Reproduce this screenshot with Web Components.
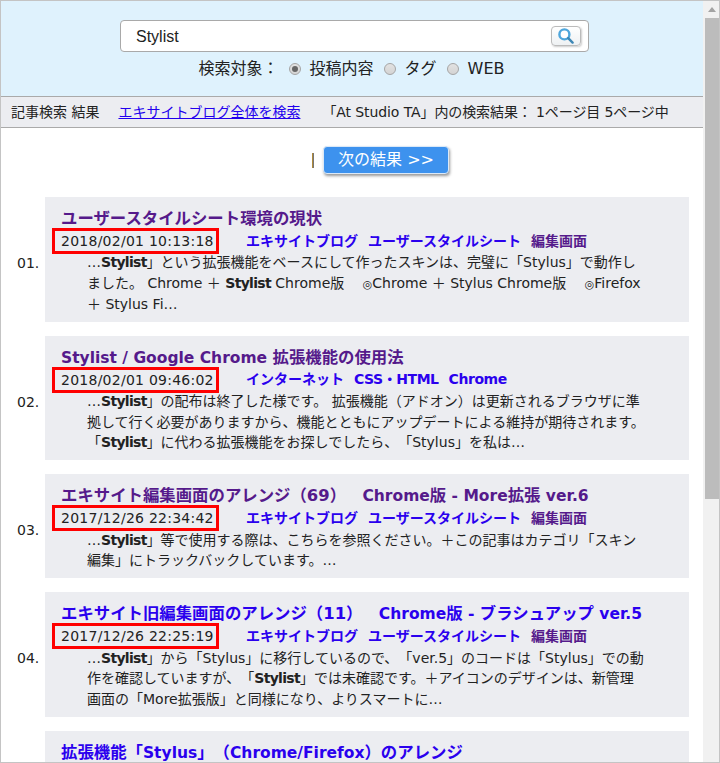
<!DOCTYPE html>
<html lang="ja">
<head>
<meta charset="utf-8">
<title>記事検索 結果</title>
<style>
  html, body { margin: 0; padding: 0; height: 763px; overflow: hidden; background: #fff; }
  body { font-family: "DejaVu Sans", "Noto Sans CJK JP", sans-serif; color: #222; text-spacing-trim: space-all; }
  b { letter-spacing: -.7px; }
  .la { font-size: 15.5px; line-height: 0; }
  .mk { font-size: 11px; line-height: 0; }
  a.tight { letter-spacing: -.45px; }
</style>
</head>
<body>
<search-page>
  <search-header slot="top"></search-header>
  <result-bar slot="top"></result-bar>
  <next-link></next-link>
  <result-item num="01." date="2018/02/01 10:13:18">
    <span slot="heading">ユーザースタイルシート環境の現状</span>
    <a slot="tags">エキサイトブログ</a><a slot="tags">ユーザースタイルシート</a><a slot="tags" class="seen">編集画面</a>
    …<b>Stylist</b>」という拡張機能をベースにして作ったスキンは、完璧に「Stylus」で動作しました。 Chrome ＋ <b>Stylist</b> Chrome版　 <span class="mk">◎</span>Chrome ＋ Stylus Chrome版　 <span class="mk">◎</span>Firefox ＋ Stylus Fi…
  </result-item>
  <result-item num="02." date="2018/02/01 09:46:02">
    <span slot="heading"><span class="la">Stylist / Google Chrome </span>拡張機能の使用法</span>
    <a slot="tags">インターネット</a><a slot="tags" class="tight">CSS・HTML</a><a slot="tags" class="tight">Chrome</a>
    …<b>Stylist</b>」の配布は終了した様です。 拡張機能（アドオン）は更新されるブラウザに準拠して行く必要がありますから、機能とともにアップデートによる維持が期待されます。 「<b>Stylist</b>」に代わる拡張機能をお探しでしたら、「Stylus」を私は…
  </result-item>
  <result-item num="03." date="2017/12/26 22:34:42">
    <span slot="heading">エキサイト編集画面のアレンジ（69）　<span class="la">Chrome</span>版<span class="la"> - More</span>拡張<span class="la"> ver.6</span></span>
    <a slot="tags">エキサイトブログ</a><a slot="tags">ユーザースタイルシート</a><a slot="tags" class="seen">編集画面</a>
    …<b>Stylist</b>」等で使用する際は、こちらを参照ください。＋この記事はカテゴリ「スキン編集」にトラックバックしています。…
  </result-item>
  <result-item unseen num="04." date="2017/12/26 22:25:19">
    <span slot="heading">エキサイト旧編集画面のアレンジ（11）　<span class="la">Chrome</span>版<span class="la"> - </span>ブラシュアップ<span class="la"> ver.5</span></span>
    <a slot="tags">エキサイトブログ</a><a slot="tags">ユーザースタイルシート</a><a slot="tags" class="seen">編集画面</a>
    …<b>Stylist</b>」から「Stylus」に移行しているので、「ver.5」のコードは「Stylus」での動作を確認していますが、「<b>Stylist</b>」では未確認です。＋アイコンのデザインは、新管理画面の「More拡張版」と同様になり、よりスマートに…
  </result-item>
  <result-item unseen>
    <span slot="heading">拡張機能「<span class="la">Stylus</span>」（<span class="la">Chrome/Firefox</span>）のアレンジ</span>
  </result-item>
</search-page>

<script>
class SearchPage extends HTMLElement {
  constructor() {
    super();
    this.attachShadow({ mode: 'open' });
    this.shadowRoot.innerHTML = `
      <style>
        :host { display: flex; width: 720px; height: 763px; box-sizing: border-box; overflow: hidden;
                border: 1px solid #c4c4c4; }
        .main { flex: 1; min-width: 0; height: 761px; overflow: hidden; }
        .list { display: flex; flex-direction: column; gap: 14px; padding: 0 14px 0 0; }
        .bar { flex: none; width: 16px; background: #f1f1f1; display: flex; flex-direction: column; padding: 0 0 0 2px; box-sizing: border-box; }
        .up { flex: none; height: 17px; display: flex; justify-content: center; padding-top: 6px; box-sizing: border-box; }
        .thumb { flex: none; height: 481px; background: #bcbcbc; }
      </style>
      <div class="main">
        <slot name="top"></slot>
        <div class="list"><slot></slot></div>
      </div>
      <div class="bar">
        <div class="up"><svg width="8" height="5" viewBox="0 0 8 5"><path d="M4 0L8 5H0z" fill="#a3a3a3"/></svg></div>
        <div class="thumb"></div>
      </div>`;
  }
}

class SearchHeader extends HTMLElement {
  constructor() {
    super();
    this.attachShadow({ mode: 'open' });
    this.shadowRoot.innerHTML = `
      <style>
        :host { display: block; box-sizing: border-box; background: #dff2fd; padding-top: 19px;
                border-bottom: 1px solid #aaa; height: 96px; font-size: 16px; color: #222; }
        .box { width: 469px; height: 32px; box-sizing: border-box; margin: 0 auto 0 119px; background: #fff;
               border: 1px solid #a9a9a9; border-radius: 4px; display: flex; align-items: center;
               padding: 0 0 0 15px; font: 16px "Liberation Sans", sans-serif; }
        .q { flex: 1; padding-top: 1px; }
        .btn { width: 30px; height: 20px; box-sizing: border-box; border: 1px solid #bbb; border-radius: 4px;
               background: linear-gradient(#fff, #eef1f3); box-shadow: 1px 1px 2px #ccc; display: flex;
               align-items: center; justify-content: center; margin: -1px 7px 0 0; }
        .opts { display: flex; align-items: center; justify-content: center; margin: 5px 0 0 -1px; height: 24px; line-height: 24px; }
        .r { width: 12px; height: 12px; box-sizing: border-box; border-radius: 50%; border: 1px solid #a5a5a5;
             background: linear-gradient(#e2e2e2, #d4d4d4); margin: 0 9px 0 10px; display: flex; align-items: center; justify-content: center; }
        .r.on::after { content: ""; width: 6px; height: 6px; border-radius: 50%; background: #666; }
      </style>
      <div class="box">
        <span class="q">Stylist</span>
        <span class="btn"><svg width="16" height="16" viewBox="0 0 16 16" fill="none">
          <circle cx="6.4" cy="6.4" r="5" fill="#fff" stroke="#4ea6dc" stroke-width="2.4"/>
          <path d="M10.2 10.2L14.6 14.6" stroke="#3d87b5" stroke-width="2.4" stroke-linecap="round"/>
        </svg></span>
      </div>
      <div class="opts">
        <span>検索対象：</span><span class="r on"></span><span>投稿内容</span><span class="r"></span><span>タグ</span><span class="r"></span><span>WEB</span>
      </div>`;
  }
}

class ResultBar extends HTMLElement {
  constructor() {
    super();
    this.attachShadow({ mode: 'open' });
    this.shadowRoot.innerHTML = `
      <style>
        :host { display: flex; align-items: center; height: 31px; box-sizing: border-box; background: #ecedf1;
                border-bottom: 1px solid #aaa; padding: 0 0 2px 10px; font-size: 14px; color: #222; white-space: nowrap; }
        a { color: #2200ee; text-decoration: underline; margin: 0 22px 0 19px; }
        .info { letter-spacing: -.1px; }
      </style>
      <span>記事検索 結果</span>
      <a>エキサイトブログ全体を検索</a>
      <span class="info">「At Studio TA」内の検索結果： 1ページ目 5ページ中</span>`;
  }
}

class NextLink extends HTMLElement {
  constructor() {
    super();
    this.attachShadow({ mode: 'open' });
    this.shadowRoot.innerHTML = `
      <style>
        :host { display: flex; align-items: center; height: 55px; box-sizing: border-box;
                padding: 9px 0 0 311px; font-size: 16px; }
        .sep { width: 1px; height: 15px; background: #b08a3a; margin-right: 9px; border-right: 1px solid #777; }
        .btn { width: 126px; height: 28px; box-sizing: border-box; background: #3d92ee; color: #fff; border-radius: 4px;
               border: 1px solid #dbe9f8; box-shadow: 1px 2px 3px #999; text-align: center; line-height: 25px; }
      </style>
      <span class="sep"></span><span class="btn">次の結果 &gt;&gt;</span>`;
  }
}

class ResultItem extends HTMLElement {
  constructor() {
    super();
    this.attachShadow({ mode: 'open' });
    this.shadowRoot.innerHTML = `
      <style>
        :host { display: flex; align-items: center; padding-left: 16px; font-size: 14px; color: #222; flex: none; }
        .num { width: 28px; flex: none; padding-top: 8px; }
        .card { flex: 1; min-width: 0; background: #ecedf1; padding: 12px 44px 7.4px 16px; box-sizing: border-box; }
        :host(:not([date])) .card { min-height: 124px; }
        h3 { margin: 0; font-size: 16.4px; line-height: 19px; color: #551a8b; font-weight: bold; white-space: nowrap; }
        :host([unseen]) h3 { color: #2a00ee; }
        .meta { display: flex; align-items: center; height: 26px; margin-left: -9px; }
        .date { box-sizing: border-box; width: 167px; height: 26px; border: 3px solid #f00; line-height: 21px; padding-left: 6px; white-space: nowrap; letter-spacing: .25px; }
        .tags { margin-left: 27px; display: flex; align-items: baseline; gap: 10px; font-weight: bold; margin-top: -3px; }
        ::slotted(a) { color: #2a00ee; }
        ::slotted(a.seen) { color: #551a8b; }
        .body { margin: -1.6px 0 0 26px; line-height: 20.6px; }
      </style>
      <div class="num"></div>
      <div class="card">
        <h3><slot name="heading"></slot></h3>
        <div class="meta"><span class="date"></span><span class="tags"><slot name="tags"></slot></span></div>
        <div class="body"><slot></slot></div>
      </div>`;
  }
  connectedCallback() {
    const date = this.getAttribute('date');
    this.shadowRoot.querySelector('.num').textContent = this.getAttribute('num');
    if (date) this.shadowRoot.querySelector('.date').textContent = date;
    else this.shadowRoot.querySelector('.meta').remove();
  }
}

customElements.define('search-page', SearchPage);
customElements.define('search-header', SearchHeader);
customElements.define('result-bar', ResultBar);
customElements.define('next-link', NextLink);
customElements.define('result-item', ResultItem);
</script>
</body>
</html>
